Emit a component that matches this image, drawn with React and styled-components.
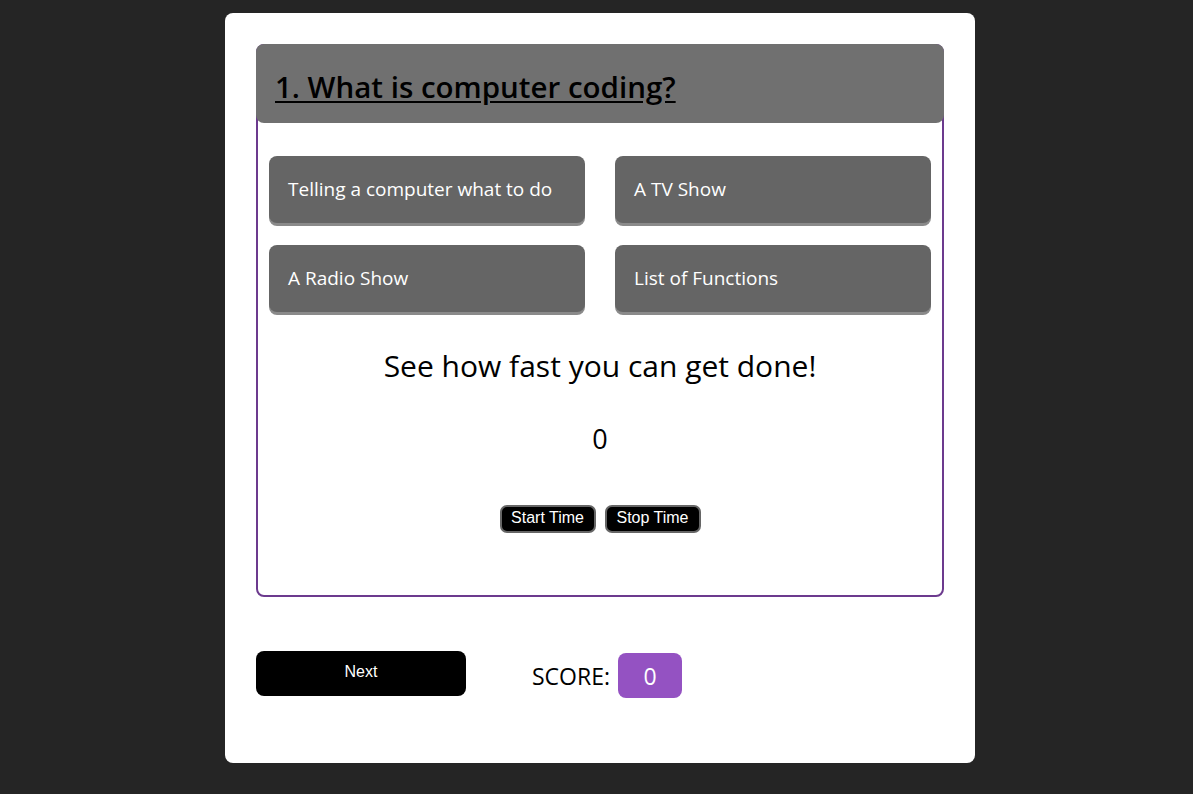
import React, { useState } from 'react';
import styled, { createGlobalStyle } from 'styled-components';

const GlobalStyle = createGlobalStyle`
  html, body {
    margin: 0;
    padding: 0;
    background: #252525;
    font-family: "Open Sans", "Noto Sans", sans-serif;
  }
`;

const Page = styled.div`
  display: flex;
  justify-content: center;
  align-items: flex-start;
  padding: 13px 0 0 7px;
`;

const Card = styled.div`
  width: 750px;
  box-sizing: border-box;
  background: #fff;
  border-radius: 8px;
  padding: 31px 31px 65px;
`;

const QuizBox = styled.div`
  border: 2px solid #6c3a8e;
  border-radius: 8px;
  padding-bottom: 62px;
`;

const Question = styled.h2`
  margin: -2px -2px 0;
  height: 79px;
  box-sizing: border-box;
  background: #707070;
  border-radius: 8px;
  padding: 22px 19px 0;
  font-size: 29.5px;
  font-weight: 600;
  color: #000;
  text-decoration: underline;
  text-underline-offset: 3px;
`;

const Answers = styled.div`
  display: grid;
  grid-template-columns: 1fr 1fr;
  column-gap: 30px;
  row-gap: 22px;
  padding: 33px 11px 0;
`;

const Answer = styled.button`
  height: 67px;
  border: none;
  border-radius: 8px;
  background: #656565;
  box-shadow: 0 3px 0 #8a8a8a;
  color: #fff;
  text-align: left;
  padding: 0 19px 2px;
  font-family: "Open Sans", "Noto Sans", sans-serif;
  font-size: 19px;
  cursor: pointer;
`;

const Motto = styled.p`
  margin: 33px 0 0;
  text-align: center;
  font-size: 30px;
  color: #000;
`;

const Timer = styled.p`
  margin: 34px 0 0;
  text-align: center;
  font-size: 27px;
  color: #000;
`;

const TimeButtons = styled.div`
  display: flex;
  justify-content: center;
  gap: 9px;
  margin-top: 48px;
`;

const TimeButton = styled.button`
  height: 28px;
  width: 96px;
  background: #000;
  color: #fff;
  border: 2px solid #666;
  border-radius: 7px;
  font-family: "Liberation Sans", Arial, sans-serif;
  font-size: 16px;
  padding: 0 4px 2px;
  cursor: pointer;
`;

const Footer = styled.div`
  display: flex;
  align-items: center;
  margin-top: 51px;
`;

const NextButton = styled.button`
  width: 210px;
  height: 45px;
  background: #000;
  color: #fff;
  border: none;
  border-radius: 8px;
  font-family: "Liberation Sans", Arial, sans-serif;
  font-size: 16px;
  padding-bottom: 3px;
  cursor: pointer;
`;

const Score = styled.div`
  display: flex;
  align-items: center;
  gap: 8px;
  margin-left: 66px;
  margin-top: 5px;
  font-size: 23px;
  color: #000;
`;

const ScoreBadge = styled.span`
  width: 64px;
  height: 45px;
  display: flex;
  align-items: center;
  justify-content: center;
  background: #9452c2;
  color: #fff;
  border-radius: 8px;
  font-size: 23px;
`;

const answers = [
  'Telling a computer what to do',
  'A TV Show',
  'A Radio Show',
  'List of Functions',
];

export default function App() {
  const [score] = useState(0);
  const [time] = useState(0);

  return (
    <Page>
      <GlobalStyle />
      <Card>
        <QuizBox>
          <Question>1. What is computer coding?</Question>
          <Answers>
            {answers.map((a) => (
              <Answer key={a}>{a}</Answer>
            ))}
          </Answers>
          <Motto>See how fast you can get done!</Motto>
          <Timer>{time}</Timer>
          <TimeButtons>
            <TimeButton>Start Time</TimeButton>
            <TimeButton>Stop Time</TimeButton>
          </TimeButtons>
        </QuizBox>
        <Footer>
          <NextButton>Next</NextButton>
          <Score>
            SCORE: <ScoreBadge>{score}</ScoreBadge>
          </Score>
        </Footer>
      </Card>
    </Page>
  );
}
